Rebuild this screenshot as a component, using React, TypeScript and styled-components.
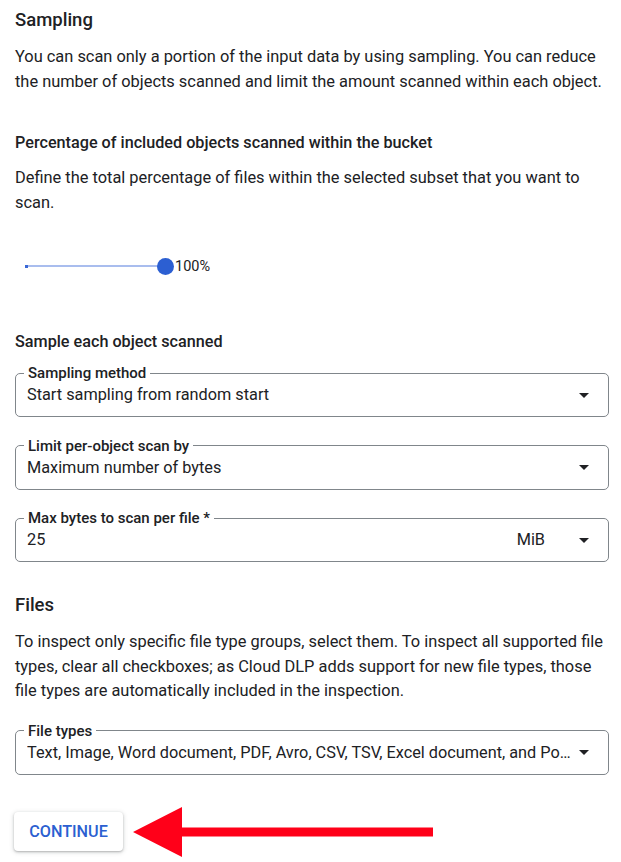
import React from "react";
import styled, { createGlobalStyle } from "styled-components";

const GlobalStyle = createGlobalStyle`
  html, body {
    margin: 0;
    padding: 0;
    background: #ffffff;
  }
  body {
    font-family: Roboto, "Liberation Sans", Arial, sans-serif;
    color: #202124;
    -webkit-font-smoothing: antialiased;
  }
`;

const fileTypes =
  "Text, Image, Word document, PDF, Avro, CSV, TSV, Excel document, and PowerPoint document";

function App() {
  return (
    <>
      <GlobalStyle />
      <Page>
        <SectionTitle>Sampling</SectionTitle>
        <Paragraph>
          You can scan only a portion of the input data by using sampling. You can reduce
          the number of objects scanned and limit the amount scanned within each object.
        </Paragraph>

        <SubTitle $top={39}>Percentage of included objects scanned within the bucket</SubTitle>
        <Paragraph>
          Define the total percentage of files within the selected subset that you want to
          scan.
        </Paragraph>

        <SliderRow>
          <SliderTrack>
            <SliderStart />
            <SliderThumb />
          </SliderTrack>
          <SliderValue>100%</SliderValue>
        </SliderRow>

        <SubTitle $top={56}>Sample each object scanned</SubTitle>

        <FieldList>
          <Field>
            <FieldLabel>Sampling method</FieldLabel>
            <FieldValue>Start sampling from random start</FieldValue>
            <DropArrow />
          </Field>
          <Field>
            <FieldLabel>Limit per-object scan by</FieldLabel>
            <FieldValue>Maximum number of bytes</FieldValue>
            <DropArrow />
          </Field>
          <Field>
            <FieldLabel>Max bytes to scan per file *</FieldLabel>
            <FieldValue>25</FieldValue>
            <Unit>MiB</Unit>
            <DropArrow />
          </Field>
        </FieldList>

        <SectionTitle $top={31}>Files</SectionTitle>
        <Paragraph $top={13}>
          To inspect only specific file type groups, select them. To inspect all supported file
          types, clear all checkboxes; as Cloud DLP adds support for new file types, those
          file types are automatically included in the inspection.
        </Paragraph>

        <FieldList $top={19}>
          <Field>
            <FieldLabel>File types</FieldLabel>
            <FieldValue>{fileTypes}</FieldValue>
            <DropArrow $gap={8} />
          </Field>
        </FieldList>

        <Actions>
          <ContinueButton type="button">CONTINUE</ContinueButton>
          <Pointer width="300" height="50" viewBox="0 0 300 50">
            <polygon points="0,25 49,0 49,20.5 300,20.5 300,29.5 49,29.5 49,50" fill="#ff0019" />
          </Pointer>
        </Actions>
      </Page>
    </>
  );
}

function DropArrow({ $gap = 14 }: { $gap?: number }) {
  return (
    <ArrowIcon $gap={$gap} width="10" height="5" viewBox="0 0 10 5">
      <path d="M0 0 L10 0 L5 5 Z" fill="#202124" />
    </ArrowIcon>
  );
}

const Page = styled.div`
  width: 594px;
  padding: 8px 12px 0 15px;
`;

const SectionTitle = styled.h2<{ $top?: number }>`
  margin: ${(p) => p.$top ?? 0}px 0 0;
  font-size: 18.5px;
  line-height: 24px;
  font-weight: 500;
`;

const SubTitle = styled.h3<{ $top?: number }>`
  margin: ${(p) => p.$top ?? 0}px 0 0;
  font-size: 16.2px;
  line-height: 20px;
  font-weight: 500;
`;

const Paragraph = styled.p<{ $top?: number }>`
  margin: ${(p) => p.$top ?? 13}px 0 0;
  font-size: 16.4px;
  line-height: 24.5px;
  font-weight: 400;
`;

const SliderRow = styled.div`
  display: flex;
  align-items: center;
  height: 20px;
  margin-top: 41px;
  padding-left: 10px;
`;

const SliderTrack = styled.div`
  width: 140px;
  height: 2px;
  background: #a9bdee;
  display: flex;
  align-items: center;
  justify-content: space-between;
`;

const SliderStart = styled.span`
  width: 3px;
  height: 3px;
  background: #3a68d6;
`;

const SliderThumb = styled.span`
  width: 17px;
  height: 17px;
  border-radius: 50%;
  background: #2c5fd2;
  margin-right: -8.5px;
`;

const SliderValue = styled.span`
  margin-left: 10px;
  font-size: 14.5px;
  color: #202124;
`;

const FieldList = styled.div<{ $top?: number }>`
  display: flex;
  flex-direction: column;
  gap: 20.5px;
  margin-top: ${(p) => p.$top ?? 13}px;
`;

const Field = styled.fieldset`
  display: flex;
  align-items: center;
  margin: 0;
  padding: 2px 11px 9px 11px;
  border: 1px solid #80868b;
  border-radius: 5px;
  min-width: 0;
`;

const FieldLabel = styled.legend`
  float: none;
  margin-left: -3px;
  padding: 0 4px;
  font-size: 15px;
  line-height: 16px;
  font-weight: 500;
  color: #202124;
`;

const FieldValue = styled.span`
  flex: 1;
  min-width: 0;
  font-size: 16.3px;
  line-height: 24px;
  white-space: nowrap;
  overflow: hidden;
  text-overflow: ellipsis;
`;

const Unit = styled.span`
  font-size: 16.3px;
  line-height: 24px;
  margin-right: 20px;
`;

const ArrowIcon = styled.svg<{ $gap: number }>`
  flex: none;
  margin: 0 8px 0 ${(p) => p.$gap}px;
`;

const Actions = styled.div`
  display: flex;
  align-items: center;
  margin-top: 32px;
  margin-left: -1px;
`;

const ContinueButton = styled.button`
  width: 109px;
  height: 39px;
  border: none;
  border-radius: 4px;
  background: #ffffff;
  box-shadow: 0 1px 2px rgba(60, 64, 67, 0.3), 0 1px 4px 1px rgba(60, 64, 67, 0.15);
  font-family: Roboto, "Liberation Sans", Arial, sans-serif;
  font-size: 16.2px;
  font-weight: 500;
  color: #2b5fd1;
  padding: 0;
  cursor: pointer;
`;

const Pointer = styled.svg`
  margin-left: 10px;
  flex: none;
`;

export default App;
